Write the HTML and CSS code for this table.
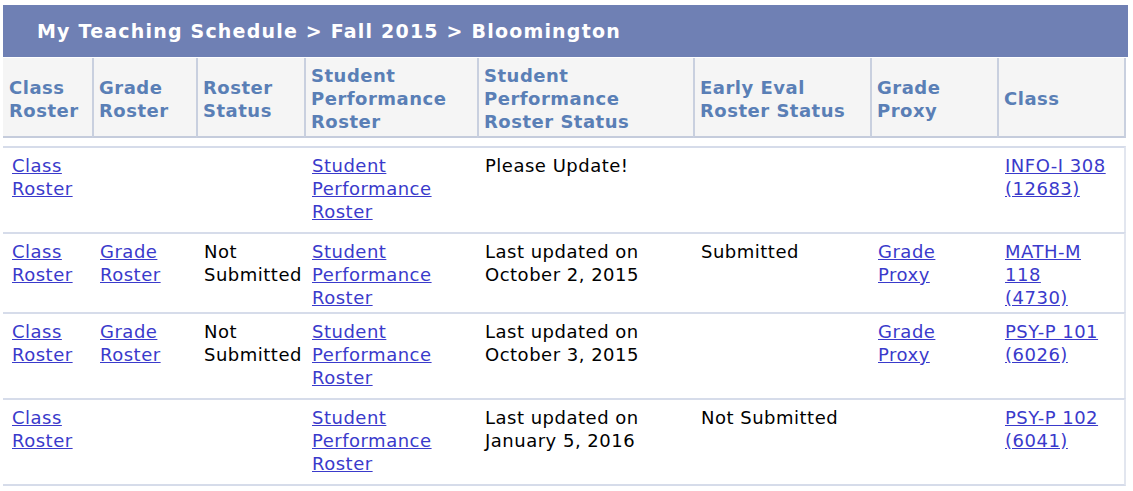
FILE: index.html
```html
<!DOCTYPE html>
<html>
<head>
<meta charset="utf-8">
<title>My Teaching Schedule</title>
<link rel="stylesheet" href="styles.css">
</head>
<body>
<div class="page">
  <div class="title">My Teaching Schedule &gt; Fall 2015 &gt; Bloomington</div>
  <table class="grid head">
    <colgroup>
      <col class="c1"><col class="c2"><col class="c3"><col class="c4"><col class="c5"><col class="c6"><col class="c7"><col class="c8">
    </colgroup>
    <thead>
      <tr>
        <th>Class Roster</th>
        <th>Grade Roster</th>
        <th>Roster Status</th>
        <th>Student Performance Roster</th>
        <th>Student Performance Roster Status</th>
        <th>Early Eval Roster Status</th>
        <th>Grade Proxy</th>
        <th>Class</th>
      </tr>
    </thead>
  </table>
  <table class="grid body">
    <colgroup>
      <col class="c1"><col class="c2"><col class="c3"><col class="c4"><col class="c5"><col class="c6"><col class="c7"><col class="c8">
    </colgroup>
    <tbody>
      <tr class="tall">
        <td><a href="#">Class Roster</a></td>
        <td></td>
        <td></td>
        <td><a href="#">Student Performance Roster</a></td>
        <td>Please Update!</td>
        <td></td>
        <td></td>
        <td class="cls"><a href="#">INFO-I 308 (12683)</a></td>
      </tr>
      <tr class="short">
        <td><a href="#">Class Roster</a></td>
        <td><a href="#">Grade Roster</a></td>
        <td>Not Submitted</td>
        <td><a href="#">Student Performance Roster</a></td>
        <td>Last updated on October 2, 2015</td>
        <td>Submitted</td>
        <td><a href="#">Grade Proxy</a></td>
        <td class="cls"><a href="#">MATH-M 118 (4730)</a></td>
      </tr>
      <tr class="tall">
        <td><a href="#">Class Roster</a></td>
        <td><a href="#">Grade Roster</a></td>
        <td>Not Submitted</td>
        <td><a href="#">Student Performance Roster</a></td>
        <td>Last updated on October 3, 2015</td>
        <td></td>
        <td><a href="#">Grade Proxy</a></td>
        <td class="cls"><a href="#">PSY-P 101 (6026)</a></td>
      </tr>
      <tr class="last">
        <td><a href="#">Class Roster</a></td>
        <td></td>
        <td></td>
        <td><a href="#">Student Performance Roster</a></td>
        <td>Last updated on January 5, 2016</td>
        <td>Not Submitted</td>
        <td></td>
        <td class="cls"><a href="#">PSY-P 102 (6041)</a></td>
      </tr>
    </tbody>
  </table>
</div>
</body>
</html>
```

FILE: styles.css
```css
html, body {
  margin: 0;
  padding: 0;
  background: #ffffff;
}

.page {
  margin: 5px 0 0 3px;
  width: 1125px;
  font-family: "DejaVu Sans", Verdana, sans-serif;
  font-size: 18px;
  line-height: 23px;
  letter-spacing: 0.5px;
  color: #000;
}

.title {
  height: 52px;
  box-sizing: border-box;
  background: #6f80b4;
  color: #ffffff;
  font-weight: bold;
  font-size: 19px;
  letter-spacing: 1.2px;
  line-height: 52px;
  padding-left: 34px;
  margin-bottom: 1px;
}

.grid {
  width: 1123px;
  table-layout: fixed;
  border-collapse: separate;
  border-spacing: 0;
}

.c1 { width: 89px; }
.c2 { width: 104px; }
.c3 { width: 108px; }
.c4 { width: 173px; }
.c5 { width: 216px; }
.c6 { width: 177px; }
.c7 { width: 127px; }
.c8 { width: 129px; }

.head th {
  background: #f5f5f5;
  color: #5a7fb6;
  font-weight: bold;
  text-align: left;
  vertical-align: middle;
  height: 80px;
  padding: 3px 4px 0 5px;
  border-left: 2px solid #c9d0df;
  border-bottom: 2px solid #c5ccdc;
  box-sizing: border-box;
}

.head th:first-child {
  border-left: none;
  padding-left: 6px;
}

.head th:last-child {
  border-right: 2px solid #c9d0df;
}

.body {
  margin-top: 8px;
}

.body td {
  vertical-align: top;
  text-align: left;
  padding: 6px 7px 0 8px;
  border-top: 2px solid #d6dcea;
  box-sizing: border-box;
}

.body tr:last-child td {
  border-bottom: 2px solid #d6dcea;
}

.body td:last-child {
  border-right: 2px solid #e2e6ef;
}

.body td:first-child {
  padding-left: 9px;
}

.body td.cls {
  padding-right: 17px;
}

.body tr.tall td { height: 86px; }
.body tr.short td { height: 80px; }
.body tr.last td { height: 88px; }

.body a {
  color: #3a3acb;
  text-decoration: underline;
}
```
